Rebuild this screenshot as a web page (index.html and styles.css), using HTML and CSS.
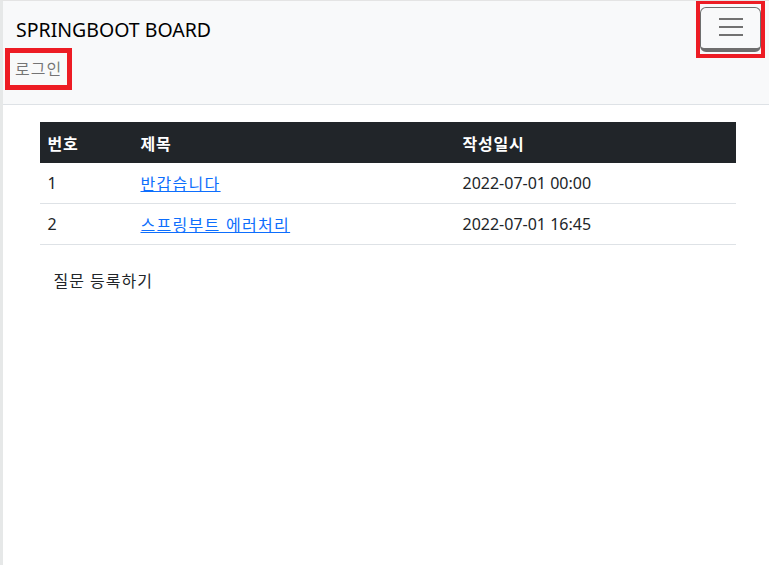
FILE: index.html
```html
<!DOCTYPE html>
<html lang="ko">
<head>
    <meta charset="UTF-8">
    <meta name="viewport" content="width=device-width, initial-scale=1.0">
    <title>SPRINGBOOT BOARD</title>
    <link rel="stylesheet" href="styles.css">
</head>
<body>

<nav class="navbar">
    <div class="navbar-top">
        <a class="brand" href="#">SPRINGBOOT BOARD</a>
        <div class="mark mark-toggler">
            <button class="toggler" type="button">
                <span></span>
                <span></span>
                <span></span>
            </button>
        </div>
    </div>
    <div class="menu">
        <a class="mark nav-link" href="#">로그인</a>
    </div>
</nav>

<div class="container">
    <table class="board">
        <thead>
            <tr>
                <th class="col-no">번호</th>
                <th class="col-title">제목</th>
                <th>작성일시</th>
            </tr>
        </thead>
        <tbody>
            <tr>
                <td>1</td>
                <td><a class="ko" href="#">반갑습니다</a></td>
                <td>2022-07-01 00:00</td>
            </tr>
            <tr>
                <td>2</td>
                <td><a class="ko" href="#">스프링부트 에러처리</a></td>
                <td>2022-07-01 16:45</td>
            </tr>
        </tbody>
    </table>
    <a class="btn" href="#">질문 등록하기</a>
</div>

</body>
</html>
```

FILE: styles.css
```css
body {
    font-family: "Noto Sans", "Noto Sans CJK KR", sans-serif;
    font-size: 16px;
    color: #212529;
    margin: 0;
    min-height: 565px;
    box-sizing: border-box;
    border-top: 1px solid #e4e4e4;
    border-left: 3px solid #e6e8e8;
    background: #fff;
}
a {
    color: #0d6efd;
}
.ko {
    letter-spacing: 1.3px;
}
.navbar {
    background-color: #f8f9fa;
    border-bottom: 1px solid #dee2e6;
    padding: 0 4px 14px 2px;
}
.navbar-top {
    display: flex;
    justify-content: space-between;
    align-items: flex-start;
    height: 47px;
}
.brand {
    margin: 14px 0 0 11px;
    font-size: 19.5px;
    line-height: 30px;
    color: #000;
    text-decoration: none;
}
.mark {
    border: 4px solid #ed1c24;
}
.mark-toggler {
    width: 61px;
    height: 50px;
    margin-top: -1px;
    margin-bottom: -11px;
    position: relative;
}
.toggler {
    display: flex;
    flex-direction: column;
    align-items: center;
    gap: 6px;
    width: 61px;
    height: 45px;
    margin-top: 3px;
    padding: 10px 0 0;
    box-sizing: border-box;
    background-color: #f8f9fa;
    border: 1px solid #6e6e6e;
    border-bottom-width: 4px;
    border-radius: 6px;
}
.toggler span {
    display: block;
    width: 24px;
    height: 2px;
    background-color: #717171;
}
.menu {
    display: flex;
}
.nav-link {
    border-width: 5px;
    padding: 0 5px;
    line-height: 32px;
    letter-spacing: 1px;
    color: rgba(0, 0, 0, 0.55);
    text-decoration: none;
}
.container {
    width: 696px;
    margin: 17px auto 0;
    padding: 0 0 0 3px;
}
.board {
    width: 100%;
    border-collapse: collapse;
}
.board th {
    background-color: #212529;
    color: #fff;
    text-align: left;
    font-weight: bold;
    letter-spacing: 0.8px;
    height: 41px;
    padding: 0 8px;
}
.board td {
    height: 40px;
    padding: 0 8px;
    border-bottom: 1px solid #dee2e6;
}
.col-no {
    width: 77px;
}
.col-title {
    width: 306px;
}
.btn {
    display: inline-block;
    margin-top: 17px;
    padding: 6px 14px;
    letter-spacing: 1px;
    color: #212529;
    text-decoration: none;
}
```
